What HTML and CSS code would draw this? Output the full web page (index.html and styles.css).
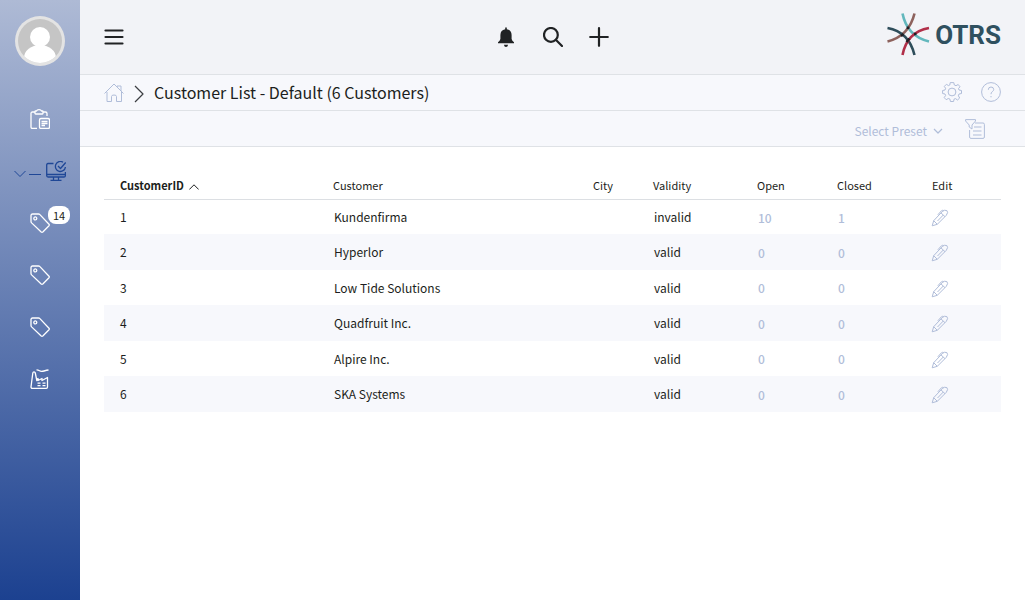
FILE: index.html
```html
<!DOCTYPE html>
<html lang="en">
<head>
<meta charset="utf-8">
<title>Customer List - OTRS</title>
<link rel="stylesheet" href="styles.css">
</head>
<body>
<svg class="sprite" aria-hidden="true">
  <symbol id="tag" viewBox="0 0 20 20"><path d="M1 2.500A1.500 1.500 0 0 1 2.500 1H8.500Q9.300 1 9.900 1.600L19 11.200Q19.600 12 19 12.700L12.800 19Q12 19.600 11.200 19L1.600 9.900Q1 9.300 1 8.500Z"/><circle cx="5.300" cy="5.400" r="1.500"/></symbol>
  <symbol id="pen" viewBox="0 0 18 18"><path d="M1.200 16.800 2.700 11.700 11.200 2.600Q13.500.4 15.900 1.600 17.600 3.200 15.300 6.300L6.300 15.300ZM2.700 11.700 6.300 15.300M10 3.900 14 7.700M6.500 12 12.300 6M6.800 5.800 10.500 1.700Q11.200 1 12.700 1.500"/></symbol>
</svg>
<div class="app">
  <aside class="sidebar">
    <button class="avatar" type="button" aria-label="Profile">
      <svg viewBox="0 0 50 50"><defs><clipPath id="face"><circle cx="25" cy="25" r="22"/></clipPath></defs><circle cx="25" cy="25" r="25" fill="#e3e3e3"/><circle cx="25" cy="25" r="22" fill="#c5c5c5"/><g clip-path="url(#face)" fill="#fff"><circle cx="25" cy="21" r="10"/><ellipse cx="25" cy="42" rx="16" ry="13"/></g></svg>
    </button>
    <nav class="nav" aria-label="Main">
      <a href="#" aria-label="Tasks"><svg class="icon" viewBox="0 0 20 20"><path d="M5 3H2.500Q1 3 1 4.500V18Q1 19.500 2.500 19.500H7M13 3H15.500Q17 3 17 4.500V7M5 4.500V2.500Q5 2 5.600 2H6.500Q7 .7 9 .7T11.500 2H12.400Q13 2 13 2.500V4.500Q13 5 12.400 5H5.600Q5 5 5 4.500Z"/><rect x="9.500" y="9.500" width="10" height="10" rx="1.500"/><path d="M11.500 12.500H17.500M11.500 14.500H17.500M11.500 16.500H15"/></svg></a>
      <a class="current" href="#" aria-label="Services"><svg class="chevron" viewBox="0 0 12 8"><path d="M.5 1 6 6.500 11.500 1"/></svg><span class="dash"></span><svg class="icon" viewBox="0 0 20 20"><path d="M7.500 2.500H2Q.7 2.500.7 4V14.500Q.7 16 2 16H18Q19.400 16 19.400 14.500V11M.7 13.500H19.400M7.500 16V19M12.500 16V19M4.500 19.300H15.500"/><path d="M17 1.200A5 5 0 1 0 19.400 6M12 5 14.500 7.500 19.700 1.500"/></svg></a>
      <a href="#" aria-label="Tickets, 14 new"><svg class="icon"><use href="#tag"/></svg><span class="badge">14</span></a>
      <a href="#" aria-label="Tickets"><svg class="icon"><use href="#tag"/></svg></a>
      <a href="#" aria-label="Tickets"><svg class="icon"><use href="#tag"/></svg></a>
      <a href="#" aria-label="Customers"><svg class="icon" viewBox="0 0 20 20"><path d="M1 18 2.800 4Q3 2.800 4 2.800T5.300 4L6.800 11.500V10L8 9.500V11.500L12 9.500V11.500L17.500 8.500V18Q17.500 19.300 16.200 19.300H2.300Q1 19.300 1 18ZM6.500 .8Q8 .8 9.500 1.800T14 2T18.500 1M7.500 14.200H10.500M12.500 14.200H15.500M7.500 16.700H10.500M12.500 16.700H15.500"/></svg></a>
    </nav>
  </aside>
  <main class="main">
    <header class="topbar">
      <button class="menu" type="button" aria-label="Menu"><svg class="icon" viewBox="0 0 20 20"><path d="M1.500 3.500H18.500M1.500 10H18.500M1.500 16.500H18.500"/></svg></button>
      <div class="tools">
        <button type="button" aria-label="Notifications"><svg class="icon" viewBox="0 0 20 20"><path class="solid" d="M8.200.4H9.800V2.200Q14.500 3 14.600 8V12Q15 14 17 15.300V16.300H1V15.300Q3 14 3.400 12V8Q3.500 3 8.200 2.200ZM6.900 17.800H11.100Q10.700 20 9 20T6.900 17.800Z"/></svg></button>
        <button type="button" aria-label="Search"><svg class="icon" viewBox="0 0 20 20"><circle cx="7.900" cy="7.900" r="6.900"/><path d="M12.800 12.800 19 19"/></svg></button>
        <button type="button" aria-label="Create"><svg class="icon" viewBox="0 0 20 20"><path d="M10 1.200V18.800M1.200 10H18.800"/></svg></button>
      </div>
      <a class="logo" href="#"><svg viewBox="0 0 44 44" aria-hidden="true"><path d="M16.500 1.500Q21 24 43 29.500" stroke="#63b8bd"/><path d="M28.500 1.500Q23 24 1.500 29.500" stroke="#8d625d"/><path d="M1.500 16Q23 20 28.500 43" stroke="#2e4d5a"/><path d="M16.500 43Q21 20 43 16" stroke="#b12f49"/><path d="M22 14.500v2.500M15 24l2.500-2M20.500 30l3-3.500M28 22h2.500" stroke="#201e24"/></svg><span>OTRS</span></a>
    </header>
    <div class="bar titlebar">
      <a class="home" href="#" aria-label="Home"><svg class="icon" viewBox="0 0 20 20"><path d="M.5 10.500 10 1 19.500 10.500M3 9V18.500H7.500V13.500Q7.500 12 10 12T12.500 13.500V18.500H17.500V9M13 4V3H17V8"/></svg></a>
      <svg class="separator" viewBox="0 0 10 18" aria-hidden="true"><path d="M1 1 9 9 1 17"/></svg>
      <h1>Customer List - Default (6 Customers)</h1>
      <div class="actions">
        <button type="button" aria-label="Settings"><svg class="icon" viewBox="0 0 20 20"><circle cx="10" cy="10" r="3.900"/><path d="M8.200.6H11.800L12.300 3 14 3.700 16.200 2.500 18 4.800 16.500 6.500 17 8 19.500 8.500V11.500L17 12 16.400 13.800 17.700 16 15.500 18 13.500 16.600 12 17.200 11.600 19.500H8.400L8 17.200 6.300 16.500 4.200 17.700 2.200 15.600 3.600 13.500 3 12 .6 11.500V8.500L3 8 3.600 6.300 2.300 4.400 4.400 2.300 6.500 3.600 7.800 3Z"/></svg></button>
        <button type="button" aria-label="Help"><svg class="icon" viewBox="0 0 20 20"><circle cx="10" cy="10" r="9.400"/><path d="M7.300 7.800Q7.300 5 10 5T12.700 7.500Q12.700 8.700 11.300 9.700T10 12.200M10 14V15.300"/></svg></button>
      </div>
    </div>
    <div class="bar filterbar">
      <button class="preset" type="button">Select Preset <svg viewBox="0 0 10 6"><path d="M1 1 5 5 9 1"/></svg></button>
      <button type="button" aria-label="Filter"><svg class="icon" viewBox="0 0 20 20"><path d="M.6.600H10.500V2L7 6V10L4.200 8V6L.6 2ZM10 4H18Q19.400 4 19.400 5.400V18Q19.400 19.400 18 19.400H6Q4.600 19.400 4.600 18V11M9 8H16.500M8 12H16.500M8 16H16.500"/></svg></button>
    </div>
    <section class="content">
      <table>
        <colgroup><col class="c-id"><col class="c-customer"><col class="c-city"><col class="c-validity"><col class="c-open"><col class="c-closed"><col class="c-edit"></colgroup>
        <thead><tr><th class="sorted" aria-sort="ascending">CustomerID <svg viewBox="0 0 10 6" aria-hidden="true"><path d="M.3 5.500 5 .8 9.700 5.500"/></svg></th><th>Customer</th><th>City</th><th>Validity</th><th>Open</th><th>Closed</th><th>Edit</th></tr></thead>
        <tbody>
          <tr><td>1</td><td>Kundenfirma</td><td></td><td>invalid</td><td><a href="#">10</a></td><td><a href="#">1</a></td><td><a href="#" aria-label="Edit"><svg class="pen"><use href="#pen"/></svg></a></td></tr>
          <tr><td>2</td><td>Hyperlor</td><td></td><td>valid</td><td><a href="#">0</a></td><td><a href="#">0</a></td><td><a href="#" aria-label="Edit"><svg class="pen"><use href="#pen"/></svg></a></td></tr>
          <tr><td>3</td><td>Low Tide Solutions</td><td></td><td>valid</td><td><a href="#">0</a></td><td><a href="#">0</a></td><td><a href="#" aria-label="Edit"><svg class="pen"><use href="#pen"/></svg></a></td></tr>
          <tr><td>4</td><td>Quadfruit Inc.</td><td></td><td>valid</td><td><a href="#">0</a></td><td><a href="#">0</a></td><td><a href="#" aria-label="Edit"><svg class="pen"><use href="#pen"/></svg></a></td></tr>
          <tr><td>5</td><td>Alpire Inc.</td><td></td><td>valid</td><td><a href="#">0</a></td><td><a href="#">0</a></td><td><a href="#" aria-label="Edit"><svg class="pen"><use href="#pen"/></svg></a></td></tr>
          <tr><td>6</td><td>SKA Systems</td><td></td><td>valid</td><td><a href="#">0</a></td><td><a href="#">0</a></td><td><a href="#" aria-label="Edit"><svg class="pen"><use href="#pen"/></svg></a></td></tr>
        </tbody>
      </table>
    </section>
  </main>
</div>
</body>
</html>
```
FILE: styles.css
```css
* { box-sizing: border-box; }
body { margin: 0; color: #1c1e20; background: #fff; font: 12px/20px "Noto Sans CJK SC", "Noto Sans", sans-serif; }
a { color: inherit; text-decoration: none; }
button { display: flex; align-items: center; padding: 0; border: 0; background: none; color: inherit; font: inherit; cursor: pointer; }
svg { display: block; flex: none; fill: none; stroke: currentColor; stroke-linejoin: round; }
.sprite { position: absolute; width: 0; height: 0; }
.icon { width: 20px; height: 20px; }
.app { display: flex; min-height: 100vh; }

.sidebar { flex: none; width: 80px; padding-top: 16px; color: #fff; background: linear-gradient(#aebad5, #1c4190); }
.avatar { margin: 0 auto; }
.avatar svg { width: 50px; height: 50px; stroke: none; }
.nav { display: flex; flex-direction: column; margin-top: 27px; }
.nav a { position: relative; display: flex; align-items: center; justify-content: center; height: 52px; }
.nav .icon { stroke-width: 1.3; }
.nav .current { justify-content: flex-start; padding-left: 14px; color: #1f4796; }
.chevron { width: 12px; height: 8px; margin-top: 6px; }
.dash { width: 12px; height: 1px; margin: 6px 5px 0 3px; background: currentColor; }
.badge { position: absolute; top: 9px; right: 10px; width: 22px; height: 18px; border-radius: 8px; background: #fff; color: #1c1e20; font-size: 11px; line-height: 18px; text-align: center; }

.main { flex: 1; min-width: 0; }
.topbar { display: grid; grid-template-columns: 1fr auto 1fr; align-items: center; height: 75px; padding: 0 24px; border-bottom: 1px solid #dfe2e6; background: #f2f3f7; color: #202224; }
.topbar button .icon { stroke-width: 2.2; stroke-linecap: round; }
.tools { display: flex; gap: 26px; }
.topbar .solid { fill: currentColor; stroke: none; }
.logo { display: flex; align-items: center; justify-self: end; gap: 5px; color: #2f505f; font: bold 26px/30px Roboto, sans-serif; }
.logo svg { width: 44px; height: 44px; stroke-width: 2.6; margin-bottom: 6px; }
.logo span { margin-bottom: 4px; }

.bar { display: flex; align-items: center; height: 36px; padding: 0 24px; border-bottom: 1px solid #dfe2e6; background: #f7f8fc; }
.titlebar { padding-bottom: 2px; }
.home, .actions, .filterbar { color: #b0bdd9; }
.separator { width: 10px; height: 18px; margin: 4px 10px 0; stroke: #3c3e42; stroke-width: 1.2; }
h1 { margin: 0; font-size: 16px; line-height: 24px; font-weight: 400; }
.home { margin-top: 2px; }
.actions { display: flex; gap: 19px; margin-left: auto; }
.filterbar { justify-content: flex-end; gap: 22px; padding-right: 40px; }
.preset { gap: 6px; padding-top: 4px; }
.preset svg { width: 10px; height: 6px; stroke-width: 1.2; }

.content { padding: 24px; }
table { width: 100%; border-collapse: collapse; table-layout: fixed; }
.c-id { width: 213px; }
.c-customer { width: 260px; }
.c-city { width: 60px; }
.c-validity { width: 104px; }
.c-open { width: 80px; }
.c-closed { width: 95px; }
.c-edit { width: 85px; }
th, td { padding: 0 0 0 16px; text-align: left; }
th { height: 28px; border-bottom: 1px solid #dcdfe3; font-size: 11px; font-weight: 400; }
.sorted { font-weight: 700; }
.sorted svg { display: inline-block; width: 10px; height: 6px; margin-left: 3px; }
td { height: 35px; }
td:nth-child(n+2) { padding-left: 17px; }
td:last-child { padding-left: 15px; }
tbody tr:nth-child(even) td { height: 36px; background: #f7f8fc; }
td a { display: inline-block; vertical-align: middle; color: #b0bdd9; font-weight: 500; }
.pen { width: 18px; height: 18px; }
```
